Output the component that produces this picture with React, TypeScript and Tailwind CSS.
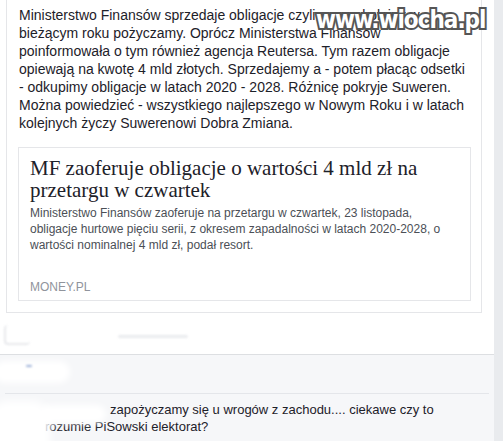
import React from 'react';

const postText =
  'Ministerstwo Finansów sprzedaje obligacje czyli po raz kolejny w bieżącym roku pożyczamy. Oprócz Ministerstwa Finansów poinformowała o tym również agencja Reutersa. Tym razem obligacje opiewają na kwotę 4 mld złotych. Sprzedajemy a - potem płacąc odsetki - odkupimy obligacje w latach 2020 - 2028. Różnicę pokryje Suweren. Można powiedzieć - wszystkiego najlepszego w Nowym Roku i w latach kolejnych życzy Suwerenowi Dobra Zmiana.';

const LinkPreview = () => (
  <div className="ml-[11px] mr-[10px] mt-[15px] mb-[11px] border border-[#e5e6e9] px-[11px] pt-[9px] pb-[5px]">
    <h3 className="font-['Liberation_Serif',serif] text-[21px] leading-[22px] text-[#1d2129]">
      MF zaoferuje obligacje o wartości 4 mld zł na przetargu w czwartek
    </h3>
    <p className="mt-[4px] text-[12px] leading-[16px] text-[#4b4f56]">
      Ministerstwo Finansów zaoferuje na przetargu w czwartek, 23 listopada, obligacje hurtowe pięciu serii, z okresem
      zapadalności w latach 2020-2028, o wartości nominalnej 4 mld zł, podał resort.
    </p>
    <div className="mt-[26px] text-[12px] leading-[16px] uppercase text-[#90949c]">money.pl</div>
  </div>
);

export default function App() {
  return (
    <div className="relative flex h-[441px] w-[503px] overflow-hidden bg-[#e9ebee] font-['Liberation_Sans',Arial,sans-serif]">
      <div className="flex w-[494px] flex-col bg-white">
        {/* udostępniony post */}
        <div className="pl-[6px] pr-[12px]">
          <div className="border-x border-b border-[#e5e6e9]">
            <p className="px-[12px] pt-[6px] text-[14px] leading-[18px] text-[#1d2129]">{postText}</p>
            <LinkPreview />
          </div>
        </div>

        {/* zamazany pasek reakcji */}
        <div className="relative h-[41px]">
          <div className="absolute left-[4px] top-[12px] h-[20px] w-[26px] rounded-sm border-b-2 border-l-2 border-[#d8dadf] opacity-60 blur-[1px]" />
          <div className="absolute left-[118px] top-[22px] h-[3px] w-[70px] rounded-full bg-[#e2e4e8] opacity-70 blur-[1px]" />
        </div>

        {/* komentarze */}
        <div className="relative flex-1 border-t border-[#dddfe2] bg-[#f6f7f9] px-[5px]">
          <div className="mt-[38px] border-t border-[#e4e6ea]" />
          <p className="pl-[40px] pt-[7px] text-[13px] leading-[17px] text-[#1d2129]">
            <span className="pl-[65px]">zapożyczamy się u wrogów z zachodu.... ciekawe czy to</span>
            <br />
            rozumie PiSowski elektorat?
          </p>
          <div className="absolute left-[-6px] top-[6px] h-[22px] w-[76px] rounded-full bg-white blur-[3px]" />
          <div className="absolute left-[26px] top-[10px] h-[2px] w-[6px] rounded-full bg-[#9fb3d9] blur-[1px]" />
          <div className="absolute left-[-10px] top-[46px] h-[60px] w-[60px] rounded-[18px] bg-white blur-[4px]" />
          <div className="absolute left-[40px] top-[50px] h-[18px] w-[66px] rounded-full bg-white blur-[3px]" />
        </div>
      </div>

      {/* znak wodny */}
      <div className="absolute left-[316px] top-[4px] font-['DejaVu_Sans_Condensed','DejaVu_Sans',sans-serif] text-[24px] font-bold leading-[32px] tracking-[-1px] text-white [-webkit-text-stroke:4px_#555] [paint-order:stroke_fill]">
        www.wiocha.pl
      </div>
    </div>
  );
}
